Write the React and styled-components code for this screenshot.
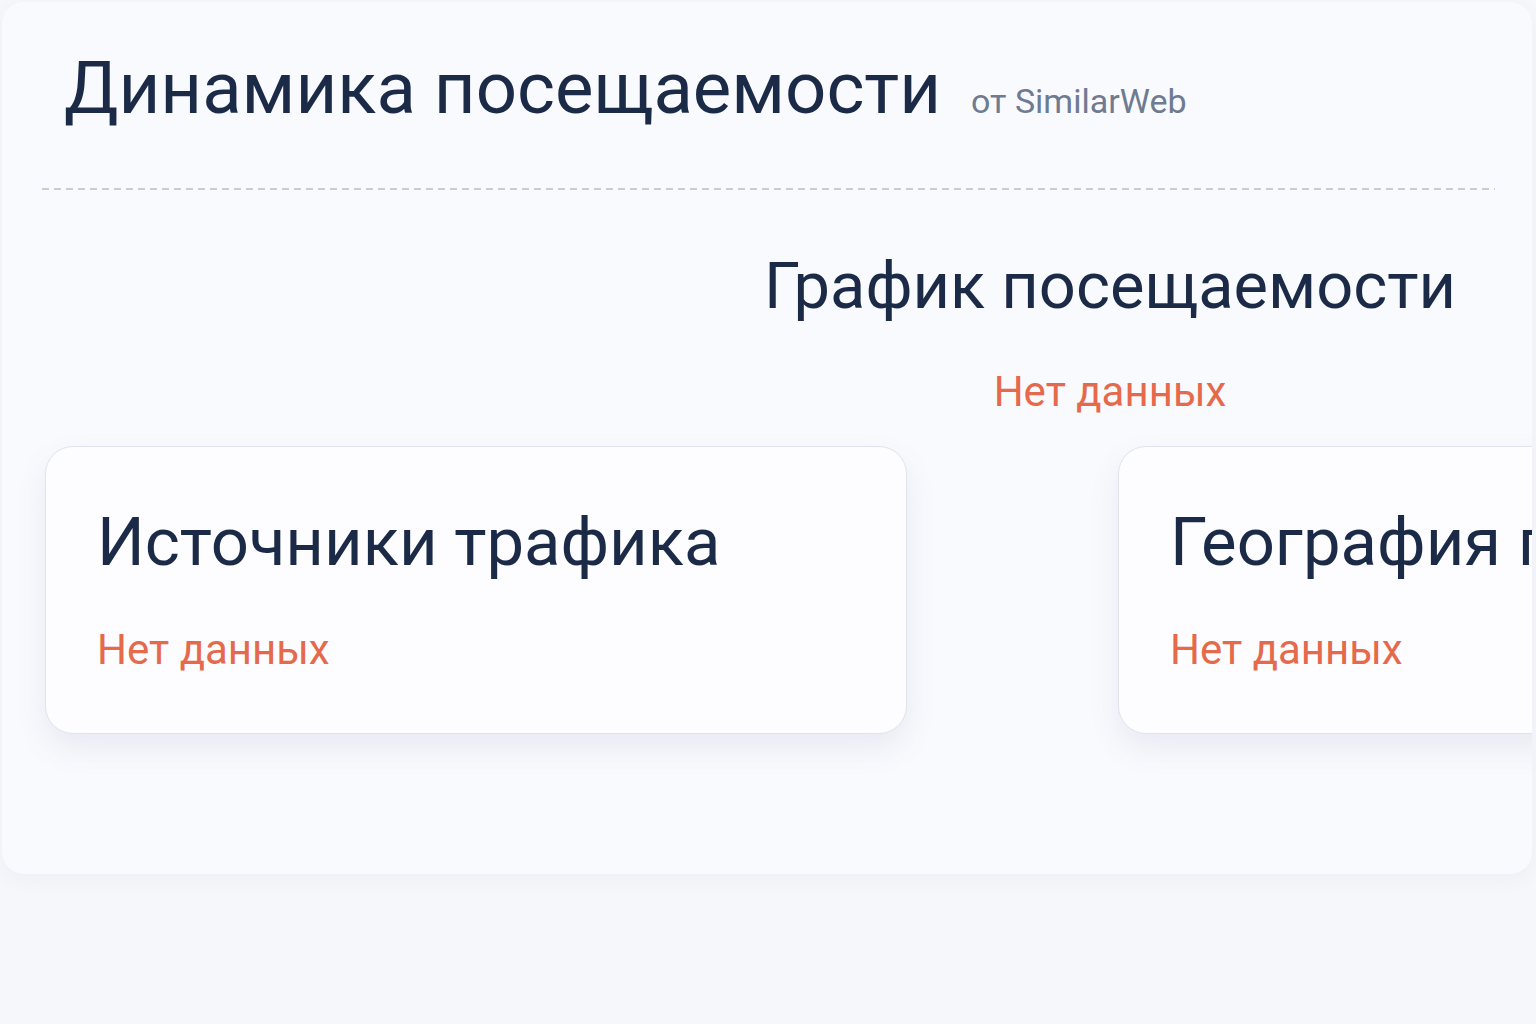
import React from 'react';
import styled, { createGlobalStyle } from 'styled-components';

const GlobalStyle = createGlobalStyle`
  html, body {
    margin: 0;
    padding: 0;
    background: #f6f7fa;
    font-family: Roboto, "Noto Sans", "Liberation Sans", sans-serif;
  }
  * {
    box-sizing: border-box;
  }
`;

const Page = styled.div`
  padding: 2px 4px 0 2px;
  min-height: 100vh;
`;

const Panel = styled.section`
  background: #f9fafd;
  border-radius: 22px;
  padding: 43px 37px 140px 38px;
  overflow: hidden;
  box-shadow: 0 6px 18px rgba(90, 105, 150, 0.05);
`;

const Header = styled.header`
  display: flex;
  align-items: baseline;
  gap: 30px;
  padding-left: 24px;
`;

const Title = styled.h1`
  margin: 0;
  font-size: 72.5px;
  line-height: 1.2;
  font-weight: 400;
  color: #1b2a47;
`;

const Source = styled.span`
  font-size: 34px;
  color: #6e7b91;
`;

const Divider = styled.hr`
  border: 0;
  height: 2px;
  margin: 56px 0 0 2px;
  background-image: repeating-linear-gradient(
    to right,
    #c6ccd9 0 7px,
    transparent 7px 12px
  );
`;

const ChartBlock = styled.div`
  display: flex;
  flex-direction: column;
  align-items: center;
  width: 770px;
  margin: 57px 0 0 auto;
`;

const SectionTitle = styled.h2`
  margin: 0;
  font-size: ${(p) => p.size || 65}px;
  line-height: 1.2;
  font-weight: 400;
  color: #1b2a47;
  white-space: nowrap;
`;

const Empty = styled.p`
  margin: ${(p) => p.gap || 42}px 0 0;
  font-size: 42px;
  line-height: 1.2;
  color: #e56a4c;
`;

const CardRow = styled.div`
  display: flex;
  gap: 211px;
  margin: 29px 0 0 5px;
`;

const Card = styled.article`
  flex: 0 0 862px;
  height: 288px;
  padding: 55px 0 0 51px;
  background: #fdfdff;
  border: 1px solid #dfe3ee;
  border-radius: 28px;
  box-shadow: 0 14px 30px rgba(85, 100, 160, 0.1);
`;

const cards = ['Источники трафика', 'География посетителей'];

export default function App() {
  return (
    <>
      <GlobalStyle />
      <Page>
        <Panel>
          <Header>
            <Title>Динамика посещаемости</Title>
            <Source>от SimilarWeb</Source>
          </Header>
          <Divider />

          <ChartBlock>
            <SectionTitle>График посещаемости</SectionTitle>
            <Empty>Нет данных</Empty>
          </ChartBlock>

          <CardRow>
            {cards.map((name) => (
              <Card key={name}>
                <SectionTitle size={67}>{name}</SectionTitle>
                <Empty gap={42}>Нет данных</Empty>
              </Card>
            ))}
          </CardRow>
        </Panel>
      </Page>
    </>
  );
}
